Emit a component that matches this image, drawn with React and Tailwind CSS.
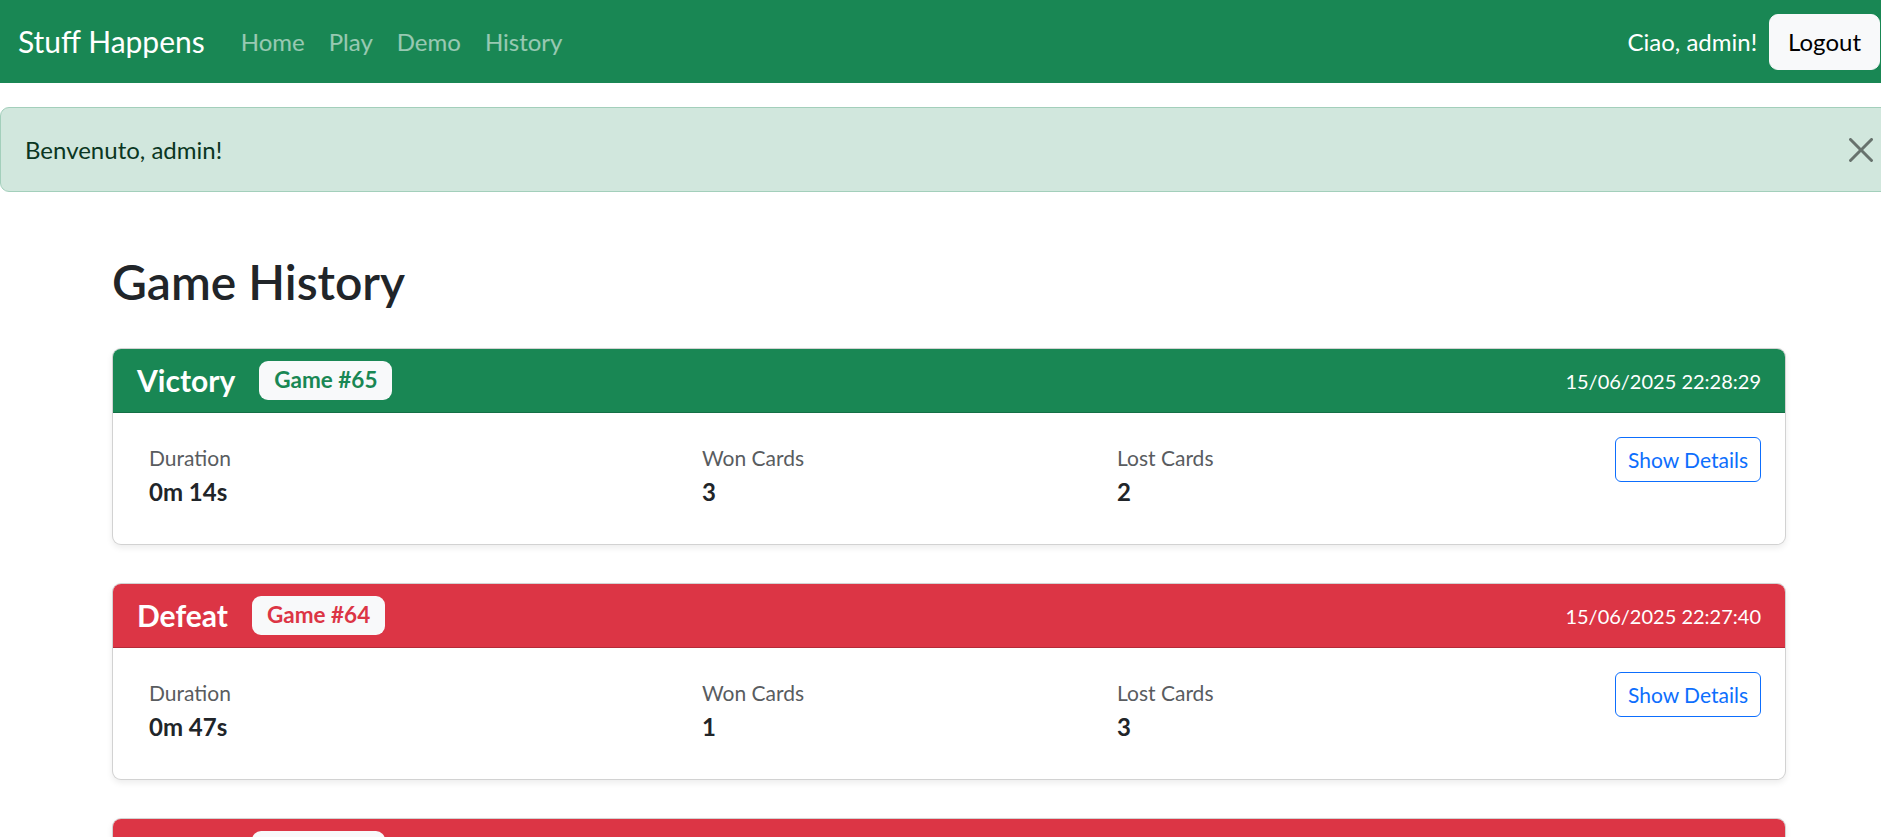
import React from 'react';

const games = [
  { id: 65, result: 'Victory', date: '15/06/2025 22:28:29', duration: '0m 14s', won: 3, lost: 2 },
  { id: 64, result: 'Defeat', date: '15/06/2025 22:27:40', duration: '0m 47s', won: 1, lost: 3 },
  { id: 63, result: 'Defeat', date: '15/06/2025 22:26:51', duration: '0m 39s', won: 2, lost: 3 },
];

const Stat = ({ label, value }) => (
  <div className="pl-3 pt-[5px]">
    <div className="text-[21px] leading-[32px] text-[#595c5f]">{label}</div>
    <div className="text-[24px] font-bold leading-[36px] text-[#212529]">{value}</div>
  </div>
);

const GameCard = ({ game }) => {
  const won = game.result === 'Victory';
  return (
    <div className="mb-[38px] overflow-hidden rounded-[9px] border border-black/[0.175] bg-white shadow-[0_3px_6px_rgba(0,0,0,0.075)]">
      {/* Header */}
      <div
        className={`flex h-[64px] items-center justify-between border-b border-black/[0.175] px-6 ${
          won ? 'bg-[#198754]' : 'bg-[#dc3545]'
        }`}
      >
        <h5 className="-mt-[2px] flex items-center text-[30px] font-bold leading-[36px] text-white">
          {game.result}
          <span
            className={`ml-6 mt-[2px] rounded-[9px] bg-[#f8f9fa] px-[15px] py-[8px] text-[22.5px] font-bold leading-none ${
              won ? 'text-[#198754]' : 'text-[#dc3545]'
            }`}
          >
            Game #{game.id}
          </span>
        </h5>
        <span className="text-[20px] leading-[32px] text-white">{game.date}</span>
      </div>

      {/* Body */}
      <div className="grid h-[131px] grid-cols-[553px_415px_415px_1fr] px-6 pt-6">
        <Stat label="Duration" value={game.duration} />
        <Stat label="Won Cards" value={game.won} />
        <Stat label="Lost Cards" value={game.lost} />
        <div className="flex items-start justify-end">
          <button className="rounded-[6px] border border-[#0d6efd] bg-white px-3 py-[6px] text-[21px] leading-[31px] text-[#0d6efd]">
            Show Details
          </button>
        </div>
      </div>
    </div>
  );
};

export default function App() {
  return (
    <div className="h-[837px] w-full overflow-hidden bg-white font-['Lato',sans-serif] text-[#212529]">
      <div className="w-[1898px]">
        {/* Navbar */}
        <nav className="flex h-[83px] items-center justify-between bg-[#198754] px-[18px]">
          <div className="flex items-center">
            <span className="mr-6 text-[30px] leading-[45px] text-white">Stuff Happens</span>
            {['Home', 'Play', 'Demo', 'History'].map((item) => (
              <span key={item} className="px-3 text-[24px] leading-[36px] text-white/55">
                {item}
              </span>
            ))}
          </div>
          <div className="flex items-center">
            <span className="mr-3 text-[24px] leading-[36px] text-white">Ciao, admin!</span>
            <button className="rounded-[9px] border border-[#f8f9fa] bg-[#f8f9fa] px-[18px] py-[9px] text-[24px] leading-[36px] text-black">
              Logout
            </button>
          </div>
        </nav>

        {/* Alert */}
        <div className="mt-6 flex items-center justify-between rounded-[9px] border border-[#a3cfbb] bg-[#d1e7dd] px-6 py-6 text-[24px] leading-[35px] text-[#0a3622]">
          <span>Benvenuto, admin!</span>
          <svg width="24" height="24" viewBox="0 0 16 16" className="opacity-50">
            <path
              fill="#000"
              d="M.293.293a1 1 0 0 1 1.414 0L8 6.586 14.293.293a1 1 0 1 1 1.414 1.414L9.414 8l6.293 6.293a1 1 0 0 1-1.414 1.414L8 9.414l-6.293 6.293a1 1 0 0 1-1.414-1.414L6.586 8 .293 1.707a1 1 0 0 1 0-1.414z"
            />
          </svg>
        </div>

        {/* Content */}
        <div className="mx-auto w-[1674px]">
          <h2 className="mt-[61px] mb-[37px] text-[48px] font-semibold leading-[58px] text-[#212529]">
            Game History
          </h2>
          {games.map((g) => (
            <GameCard key={g.id} game={g} />
          ))}
        </div>
      </div>
    </div>
  );
}
